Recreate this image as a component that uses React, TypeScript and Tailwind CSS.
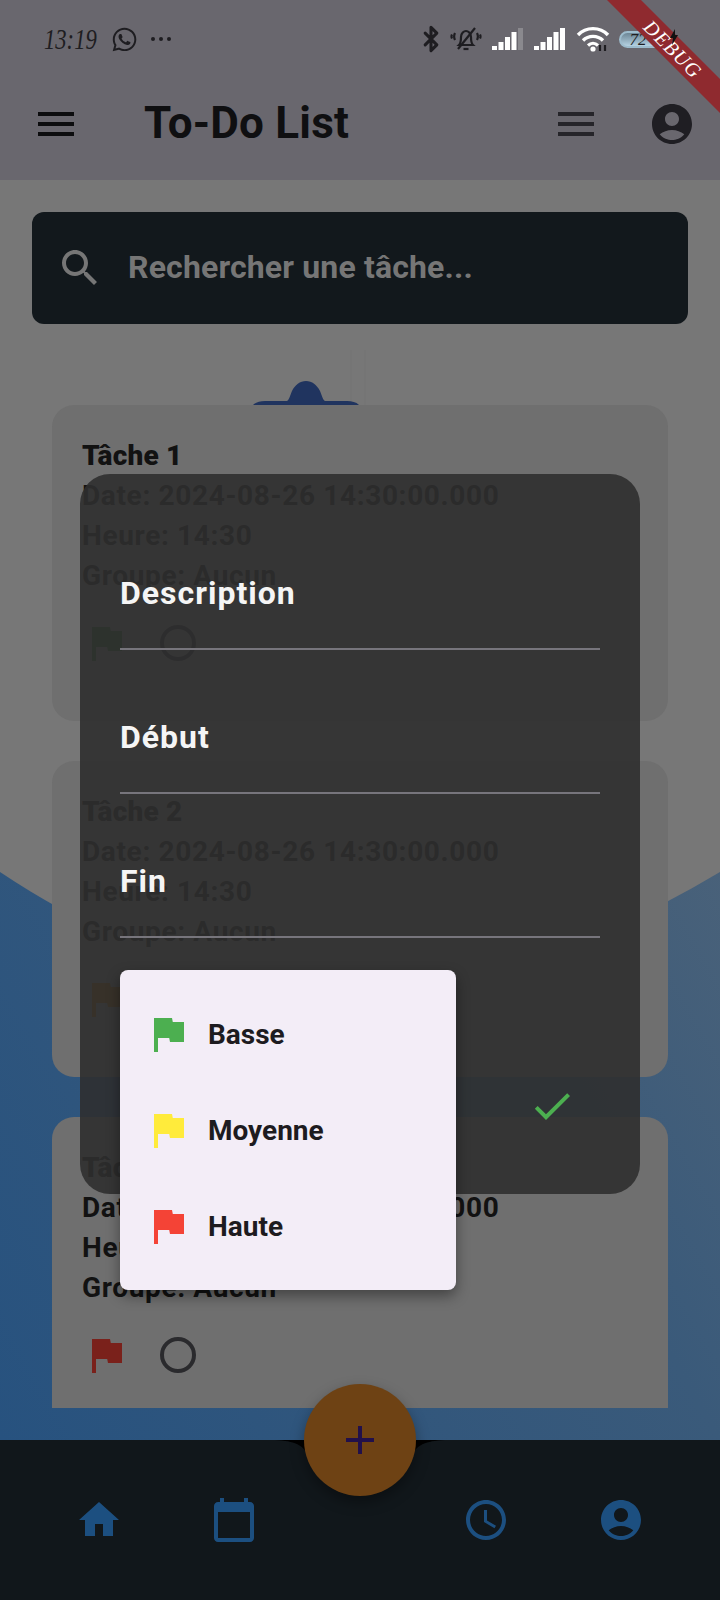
import { Bluetooth } from "lucide-react";
import { FaWhatsapp } from "react-icons/fa";

const MENU = "M3 18h18v-2H3v2zm0-5h18v-2H3v2zm0-7v2h18V6H3z";
const ACCOUNT =
  "M12 2C6.48 2 2 6.48 2 12s4.48 10 10 10 10-4.48 10-10S17.52 2 12 2zm0 4c1.93 0 3.5 1.57 3.5 3.5S13.93 13 12 13s-3.5-1.57-3.5-3.5S10.07 6 12 6zm0 14c-2.03 0-4.43-.82-6.14-2.88C7.55 15.8 9.68 15 12 15s4.45.8 6.14 2.12C16.43 19.18 14.03 20 12 20z";
const SEARCH =
  "M15.5 14h-.79l-.28-.27C15.41 12.59 16 11.11 16 9.5 16 5.91 13.09 3 9.5 3S3 5.91 3 9.5 5.91 16 9.5 16c1.61 0 3.09-.59 4.23-1.57l.27.28v.79l5 4.99L20.49 19l-4.99-5zm-6 0C7.01 14 5 11.99 5 9.5S7.01 5 9.5 5 14 7.01 14 9.5 11.99 14 9.5 14z";
const FLAG = "M14.4 6L14 4H5v17h2v-7h5.6l.4 2h7V6z";
const CHECK = "M9 16.17L4.83 12l-1.42 1.41L9 19 21 7l-1.41-1.41z";
const ADD = "M19 13h-6v6h-2v-6H5v-2h6V5h2v6h6v2z";
const HOME = "M10 20v-6h4v6h5v-8h3L12 3 2 12h3v8z";
const CALENDAR =
  "M20 3h-1V1h-2v2H7V1H5v2H4c-1.1 0-2 .9-2 2v16c0 1.1.9 2 2 2h16c1.1 0 2-.9 2-2V5c0-1.1-.9-2-2-2zm0 18H4V8h16v13z";
const CLOCK =
  "M11.99 2C6.47 2 2 6.48 2 12s4.47 10 9.99 10C17.52 22 22 17.52 22 12S17.52 2 11.99 2zM12 20c-4.42 0-8-3.58-8-8s3.58-8 8-8 8 3.58 8 8-3.58 8-8 8zM12.5 7H11v6l5.25 3.15.75-1.23-4.5-2.67z";

function Icon({ d, className }: { d: string; className: string }) {
  return (
    <svg viewBox="0 0 24 24" className={`shrink-0 fill-current ${className}`}>
      <path d={d} />
    </svg>
  );
}

function SignalBars({ lastFaint }: { lastFaint?: boolean }) {
  return (
    <svg viewBox="0 0 31 22" className="w-[31px] h-[22px] shrink-0">
      <rect x="0" y="18" width="5" height="4" fill="#fff" />
      <rect x="6.5" y="14" width="5" height="8" fill="#fff" />
      <rect x="13" y="9" width="5" height="13" fill="#fff" />
      <rect x="19.5" y="4" width="5" height="18" fill="#fff" />
      <rect x="26" y="0" width="5" height="22" fill={lastFaint ? "#8a898e" : "#fff"} />
    </svg>
  );
}

function StatusBar() {
  return (
    <div className="h-[68px] pt-[10px] flex items-center text-[#1e1d21]">
      <span className="ml-[44px] w-[67px] text-[29px] leading-none italic font-['Liberation_Serif',serif] origin-left scale-x-[0.78]">
        13:19
      </span>
      <FaWhatsapp className="w-[27px] h-[27px]" />
      <div className="ml-[13px] flex gap-[4px]">
        <span className="w-[4px] h-[4px] rounded-full bg-[#1e1d21]" />
        <span className="w-[4px] h-[4px] rounded-full bg-[#1e1d21]" />
        <span className="w-[4px] h-[4px] rounded-full bg-[#1e1d21]" />
      </div>
      <Bluetooth className="ml-[246px] w-[28px] h-[30px]" strokeWidth={2.6} />
      <svg viewBox="0 0 32 28" fill="none" stroke="currentColor" strokeWidth="2.2" className="ml-[5px] w-[32px] h-[28px] shrink-0">
        <path d="M9 20c2-2 2-4 2-8 0-4 3-6 5-6s5 2 5 6c0 4 0 6 2 8z" />
        <path d="M13.500 24h5" />
        <path d="M8 24 25 3" />
        <path d="M5 8c-1 2-1 5 0 7M2 9.500c-.5 1-.5 3 0 4M27 8c1 2 1 5 0 7M30 9.500c.5 1 .5 3 0 4" />
      </svg>
      <div className="ml-[10px]">
        <SignalBars lastFaint />
      </div>
      <div className="ml-[11px]">
        <SignalBars />
      </div>
      <svg viewBox="0 0 34 26" fill="none" className="ml-[11px] w-[34px] h-[26px] shrink-0">
        <path d="M2 9c8-8.500 22-8.500 30 0" stroke="#fff" strokeWidth="3.4" />
        <path d="M7 14.500c5.500-5.500 14.500-5.500 20 0" stroke="#fff" strokeWidth="3.4" />
        <path d="M12 19.500c3-2.800 7-2.800 10 0" stroke="#fff" strokeWidth="3.2" />
        <circle cx="17" cy="23" r="2.600" fill="#fff" />
        <path d="M24 19v6M29 19v6" stroke="#1e1d21" strokeWidth="2.200" />
      </svg>
      <div className="ml-[9px] w-[44px] h-[17px] rounded-full border-2 border-[#9dbccd] bg-linear-to-b from-[#6d8696] to-[#b5d2e2] flex items-center justify-center text-[17px] italic leading-none font-['Liberation_Serif',serif]">
        <span className="-ml-[6px]">72</span>
      </div>
    </div>
  );
}

function TaskCard({ title, flag }: { title: string; flag: string }) {
  return (
    <div className="h-[316px] shrink-0 rounded-[22px] bg-[#6f6f6f] pt-[31px] pl-[30px] text-[28px] leading-[40px] font-bold tracking-[0.65px] text-[#121212]">
      <div className="font-black tracking-[0.2px]">{title}</div>
      <div>Date: 2024-08-26 14:30:00.000</div>
      <div>Heure: 14:30</div>
      <div>Groupe: Aucun</div>
      <div className="mt-[23px] flex items-start">
        <Icon d={FLAG} className={`w-[48px] h-[48px] ${flag}`} />
        <div className="ml-[30px] mt-[6px] w-[36px] h-[36px] rounded-full border-4 border-[#2a2a2d]" />
      </div>
    </div>
  );
}

function Field({ label }: { label: string }) {
  return (
    <div className="h-[112px] flex items-center border-b-2 border-[#77757c] text-[32px] font-bold tracking-[1px] text-[#f5f5f5]">
      <span className="-mt-[1px]">{label}</span>
    </div>
  );
}

function PriorityItem({ label, flag }: { label: string; flag: string }) {
  return (
    <div className="h-[96px] pl-[24px] flex items-center gap-[16px] text-[28px] font-bold text-[#1d1b20]">
      <Icon d={FLAG} className={`w-[48px] h-[48px] ${flag}`} />
      <span className="pt-[2px]">{label}</span>
    </div>
  );
}

export default function App() {
  return (
    <div className="relative w-[720px] h-[1600px] overflow-hidden flex flex-col font-['Roboto',sans-serif] bg-[#777777]">
      <header className="h-[180px] shrink-0 bg-[#69676e]">
        <StatusBar />
        <div className="h-[112px] flex items-center pl-[32px] pr-[24px]">
          <Icon d={MENU} className="w-[48px] h-[48px] text-[#0d0d0f]" />
          <h1 className="-mt-[2px] ml-[64px] text-[44px] font-bold leading-none tracking-[0.2px] text-[#0f0f11] flex-1">
            To-Do List
          </h1>
          <Icon d={MENU} className="w-[48px] h-[48px] text-[#26252a]" />
          <Icon d={ACCOUNT} className="ml-[48px] w-[48px] h-[48px] text-[#1f1e23]" />
        </div>
      </header>

      <main className="relative flex-1 min-h-0 overflow-hidden bg-linear-to-bl/srgb from-[#5b6a79] via-[#3a5a7a] to-[#27527f]">
        <svg viewBox="0 0 720 1260" className="absolute inset-0 w-[720px] h-[1260px]">
          <path d="M0 0H720V692Q340 920 0 692Z" fill="#777777" />
          <path d="M351 225V170M365 225V170" fill="none" stroke="#747474" />
          <path d="M253 225c3-3 7-4 12-4h22c2-1 3-5 5-10 3-6 8-10 14-10s11 4 14 10c2 5 3 9 5 10h22c5 0 9 1 12 4z" fill="#20345f" />
        </svg>
        <div className="relative mt-[32px] mx-[32px] h-[112px] rounded-[12px] bg-[#12181c] flex items-center pl-[24px] text-[#767676]">
          <Icon d={SEARCH} className="w-[48px] h-[48px]" />
          <span className="-mt-[2px] ml-[24px] text-[32px] font-bold tracking-[0.15px]">Rechercher une tâche...</span>
        </div>
        <div className="relative mt-[81px] mx-[52px] h-[1003px] overflow-hidden flex flex-col gap-[40px]">
          <TaskCard title="Tâche 1" flag="text-[#265728]" />
          <TaskCard title="Tâche 2" flag="text-[#7f4c00]" />
          <TaskCard title="Tâche 3" flag="text-[#7a211b]" />
        </div>
      </main>

      <nav className="h-[160px] shrink-0 bg-[#11171b] pt-[56px] pl-[75px] pr-[75px] flex justify-between text-[#1c4f80]">
        <div className="flex gap-[87px]">
          <Icon d={HOME} className="w-[48px] h-[48px]" />
          <Icon d={CALENDAR} className="w-[48px] h-[48px]" />
        </div>
        <div className="flex gap-[87px]">
          <Icon d={CLOCK} className="w-[48px] h-[48px]" />
          <Icon d={ACCOUNT} className="w-[48px] h-[48px]" />
        </div>
      </nav>

      {/* notch corners next to the fab */}
      <svg viewBox="0 0 170 16" className="absolute left-[275px] top-[1440px] w-[170px] h-[16px]">
        <path d="M0 0H32V14C28 5 20 1 0 0ZM170 0H138V14C142 5 150 1 170 0Z" fill="#000" />
      </svg>
      <div className="absolute left-[304px] top-[1384px] w-[112px] h-[112px] rounded-full bg-[#6e4214] flex items-center justify-center shadow-[0_6px_14px_rgba(0,0,0,0.35)]">
        <Icon d={ADD} className="w-[48px] h-[48px] text-[#22104a]" />
      </div>

      {/* dialog */}
      <div className="absolute left-[80px] top-[474px] w-[560px] rounded-[30px] bg-[#2e2e2e]/[0.89] pt-[64px] pb-[64px] px-[40px]">
        <div className="flex flex-col gap-[32px]">
          <Field label="Description" />
          <Field label="Début" />
          <Field label="Fin" />
        </div>
        <div className="mt-[144px] mr-[24px] flex justify-end">
          <Icon d={CHECK} className="w-[48px] h-[48px] text-[#4caf50]" />
        </div>
      </div>

      {/* priority menu */}
      <div className="absolute left-[120px] top-[970px] w-[336px] py-[16px] rounded-[8px] bg-[#f3edf7] shadow-[0_6px_14px_rgba(0,0,0,0.4)]">
        <PriorityItem label="Basse" flag="text-[#4caf50]" />
        <PriorityItem label="Moyenne" flag="text-[#ffeb3b]" />
        <PriorityItem label="Haute" flag="text-[#f44336]" />
      </div>

      {/* debug banner */}
      <div className="absolute left-[573px] top-[37px] w-[200px] h-[24px] rotate-45 bg-[#8f2a2f] flex items-center justify-center text-white italic text-[20px] leading-none tracking-[1px] font-['Liberation_Serif',serif]">
        DEBUG
      </div>
      <svg viewBox="0 0 8 16" className="absolute left-[670px] top-[29px] w-[8px] h-[16px]">
        <path d="M5 0 0 9h3l-1 7 6-10H5z" fill="#111" />
      </svg>
    </div>
  );
}
